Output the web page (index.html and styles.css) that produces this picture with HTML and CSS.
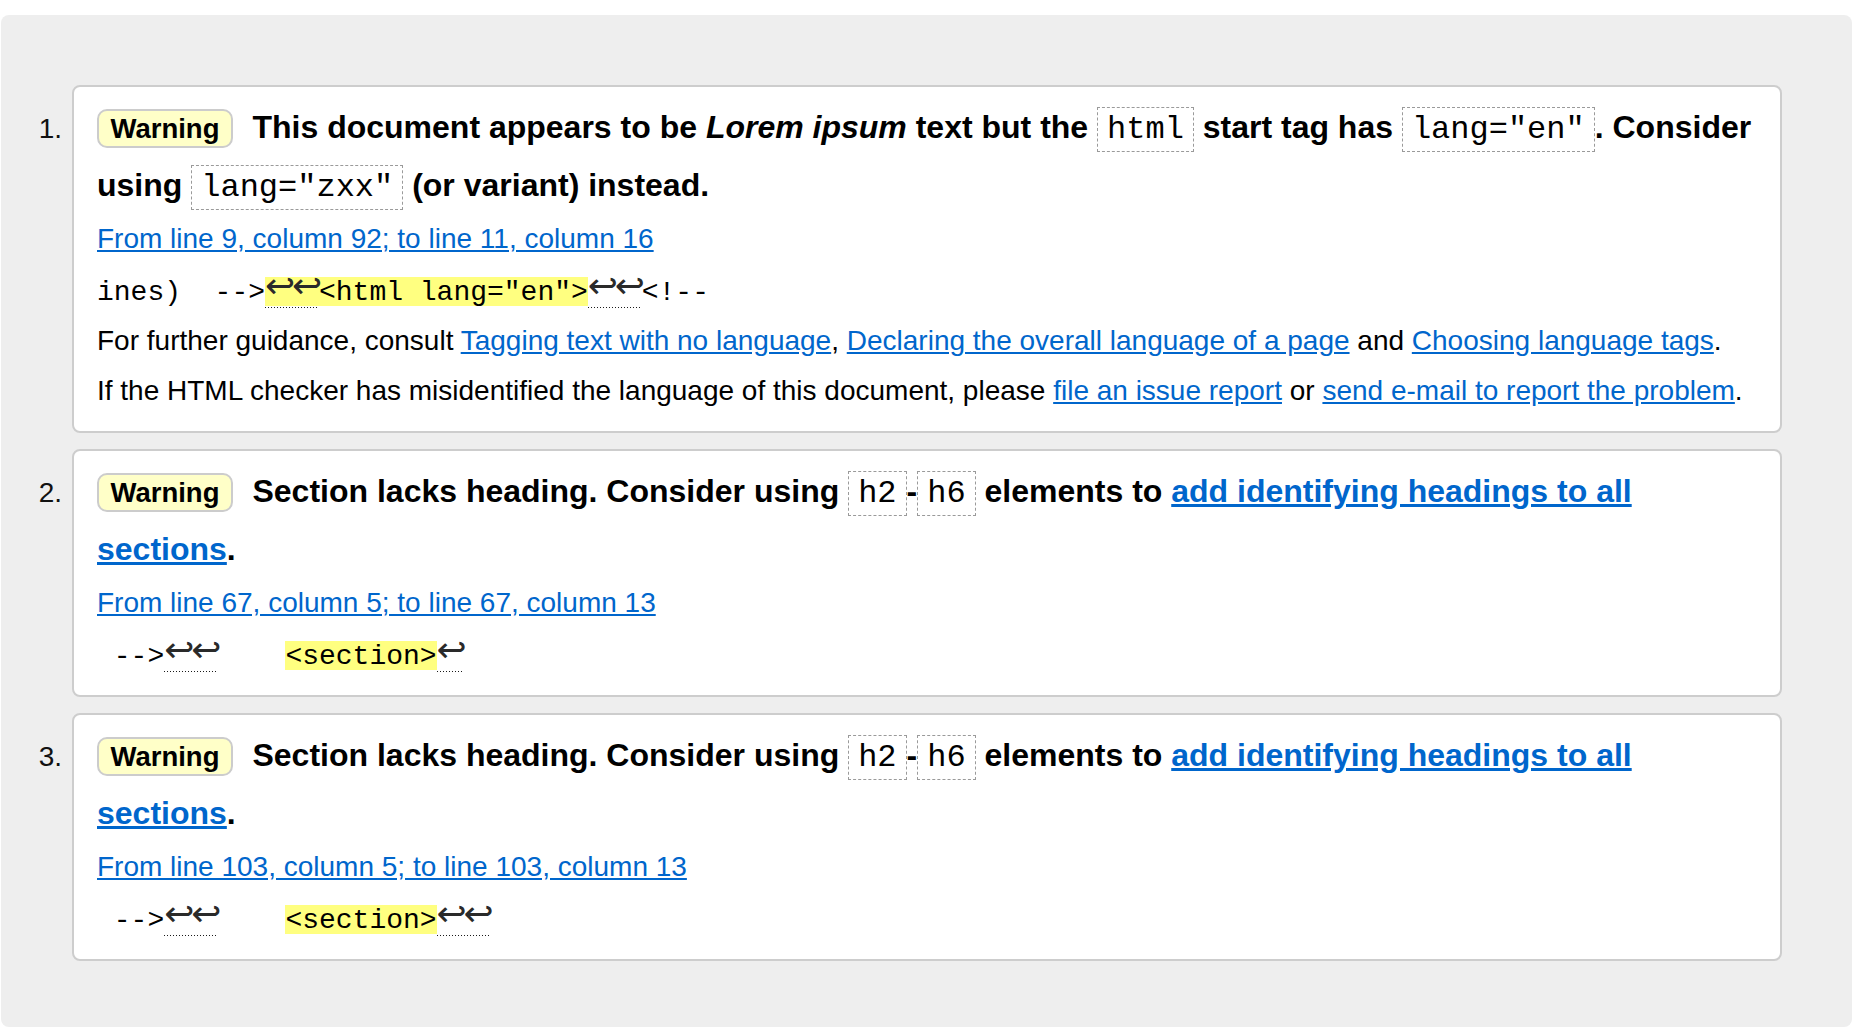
FILE: index.html
```html
<!DOCTYPE html>
<html lang="en">
<head>
<meta charset="utf-8">
<title>Validation messages</title>
<link rel="stylesheet" href="styles.css">
</head>
<body>
<div class="panel">
  <ol class="messages">
    <li class="msg">
      <span class="num">1.</span>
      <div class="card">
        <p class="head"><strong class="badge">Warning</strong>This document appears to be <em>Lorem ipsum</em> text but the <code>html</code> start tag has <code>lang="en"</code>. Consider using <code>lang="zxx"</code> (or variant) instead.</p>
        <p class="loc"><a href="#">From line 9, column 92; to line 11, column 16</a></p>
        <p class="extract"><code>ines)  --&gt;<mark class="hl"><span class="lfs"><b class="lf">↩</b><b class="lf">↩</b></span>&lt;html lang="en"&gt;</mark><span class="lfs"><b class="lf">↩</b><b class="lf">↩</b></span>&lt;!--</code></p>
        <p class="text">For further guidance, consult <a href="#">Tagging text with no language</a>, <a href="#">Declaring the overall language of a page</a> and <a href="#">Choosing language tags</a>.</p>
        <p class="text">If the HTML checker has misidentified the language of this document, please <a href="#">file an issue report</a> or <a href="#">send e-mail to report the problem</a>.</p>
      </div>
    </li>
    <li class="msg">
      <span class="num">2.</span>
      <div class="card">
        <p class="head"><strong class="badge">Warning</strong>Section lacks heading. Consider using <code>h2</code>-<code>h6</code> elements to <a href="#">add identifying headings to all sections</a>.</p>
        <p class="loc"><a href="#">From line 67, column 5; to line 67, column 13</a></p>
        <p class="extract"><code> --&gt;<span class="lfs"><b class="lf">↩</b><b class="lf">↩</b></span>    <mark class="hl">&lt;section&gt;</mark><span class="lfs"><b class="lf">↩</b></span></code></p>
      </div>
    </li>
    <li class="msg">
      <span class="num">3.</span>
      <div class="card">
        <p class="head"><strong class="badge">Warning</strong>Section lacks heading. Consider using <code>h2</code>-<code>h6</code> elements to <a href="#">add identifying headings to all sections</a>.</p>
        <p class="loc"><a href="#">From line 103, column 5; to line 103, column 13</a></p>
        <p class="extract"><code> --&gt;<span class="lfs"><b class="lf">↩</b><b class="lf">↩</b></span>    <mark class="hl">&lt;section&gt;</mark><span class="lfs"><b class="lf">↩</b><b class="lf">↩</b></span></code></p>
      </div>
    </li>
  </ol>
</div>
</body>
</html>
```

FILE: styles.css
```css
* {
  box-sizing: border-box;
}

html,
body {
  margin: 0;
  padding: 0;
  background: #ffffff;
}

body {
  font-family: "Liberation Sans", Arial, sans-serif;
  color: #000000;
}

.panel {
  margin: 15px 2px 0 1px;
  background: #eeeeee;
  border-radius: 8px;
  padding: 70px 70px 66px 0;
}

.messages {
  list-style: none;
  margin: 0;
  padding: 0;
  display: flex;
  flex-direction: column;
  gap: 16px;
}

.msg {
  display: flex;
  align-items: baseline;
}

.num {
  flex: 0 0 61px;
  margin-right: 10px;
  text-align: right;
  font-size: 28px;
  color: #111111;
}

.card {
  flex: 1;
  min-width: 0;
  background: #ffffff;
  border: 2px solid #cdcdcd;
  border-radius: 8px;
  padding: 11px 23px 15px 23px;
}

.card p {
  margin: 0;
  font-size: 28px;
  line-height: 50px;
}

.card p.head {
  font-size: 32px;
  line-height: 58px;
  font-weight: bold;
}

.badge {
  display: inline-block;
  font-size: 27.5px;
  line-height: 29px;
  padding: 3px 12px 3px 11.5px;
  margin-right: 19px;
  border: 2px solid #cccccc;
  border-radius: 10px;
  background: #ffffc8;
  font-weight: bold;
}

.head code {
  font-family: "Liberation Mono", "Courier New", monospace;
  font-weight: normal;
  font-size: 32px;
  line-height: 1;
  padding: 3px 9px;
  border: 1px dashed #9a9a9a;
}

a {
  color: #0066cc;
}

.card p.extract {
  padding-top: 4px;
  padding-bottom: 3px;
  line-height: 45px;
}

.extract code {
  font-family: "Liberation Mono", "Courier New", monospace;
  font-size: 28px;
  line-height: 1;
  white-space: pre;
}

.hl {
  display: inline-block;
  line-height: 27px;
  padding-top: 2px;
  background: #ffff80;
  color: #000000;
}

.lfs {
  line-height: 0;
  background-image: linear-gradient(to right, #1a1a1a 1.3px, transparent 1.3px);
  background-size: 3px 1.5px;
  background-repeat: repeat-x;
  background-position: left bottom;
}

.lf {
  font-family: "DejaVu Sans", sans-serif;
  font-weight: normal;
  font-size: 36px;
  letter-spacing: -3.2px;
  line-height: 0;
  vertical-align: 2px;
  color: #2a2a2a;
}
```
